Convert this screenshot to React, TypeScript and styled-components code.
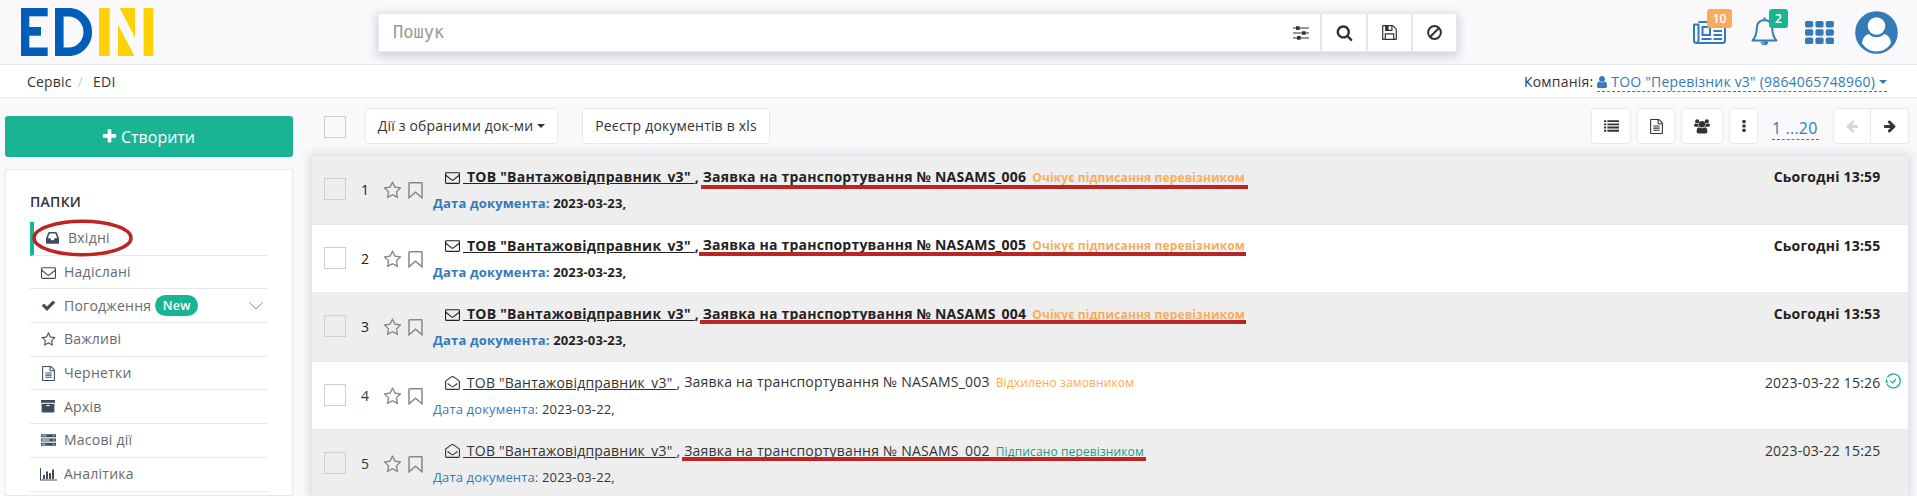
import React from "react";
import styled, { createGlobalStyle, css } from "styled-components";

const Global = createGlobalStyle`
  *, *::before, *::after { box-sizing: border-box; }
  html, body { margin: 0; height: 100%; overflow: hidden; }
  body { background: #f9f9fb; color: #333; font: 15px/20px "Open Sans", "Noto Sans", sans-serif; }
  #root { height: 100%; }
  svg { display: block; flex: none; }
  button { font: inherit; color: inherit; letter-spacing: inherit; }
`;

const C = { line: "#e7eaec", blue: "#337ab7", green: "#1ab394", orange: "#f8ac59", red: "#bd2525", slate: "#3d4d5d" };

/* ---------- icons ---------- */

const P = {
  envelope:
    "M1664 1504v-768q-32 36-69 66-268 206-426 338-51 43-83 67t-86.5 48.5-102.5 24.5h-2q-48 0-102.5-24.5t-86.5-48.5-83-67q-158-132-426-338-37-30-69-66v768q0 13 9.5 22.5t22.5 9.5h1472q13 0 22.5-9.5t9.5-22.5zm0-1051v-24.5l-.5-13-3-12.5-5.5-9-9-7.5-14-2.5h-1472q-13 0-22.5 9.5t-9.5 22.5q0 168 147 284 193 152 401 317 6 5 35 29.5t46 37.5 44.5 31.5 50.5 27.5 43 9h2q20 0 43-9t50.5-27.5 44.5-31.5 46-37.5 35-29.5q208-165 401-317 54-43 100.5-115.5t46.5-131.5zm128-37v1088q0 66-47 113t-113 47h-1472q-66 0-113-47t-47-113v-1088q0-66 47-113t113-47h1472q66 0 113 47t47 113z",
  star: "M1201 1004l306-297-422-62-189-382-189 382-422 62 306 297-73 421 378-199 377 199zm527-357q0 22-26 48l-363 354 86 500q1 7 1 20 0 50-41 50-19 0-40-12l-449-236-449 236q-22 12-40 12-21 0-31.5-14.5t-10.5-35.5q0-6 2-20l86-500-364-354q-25-27-25-48 0-37 56-46l502-73 225-455q19-41 49-41t49 41l225 455 502 73q56 9 56 46z",
  file: "M1596 380q28 28 48 76t20 88v1152q0 40-28 68t-68 28h-1344q-40 0-68-28t-28-68v-1600q0-40 28-68t68-28h896q40 0 88 20t76 48zm-444-244v376h376q-10-29-22-41l-313-313q-12-12-41-22zm384 1528v-1024h-416q-40 0-68-28t-28-68v-416h-768v1536h1280zm-1024-864q0-14 9-23t23-9h704q14 0 23 9t9 23v64q0 14-9 23t-23 9h-704q-14 0-23-9t-9-23v-64zm736 224q14 0 23 9t9 23v64q0 14-9 23t-23 9h-704q-14 0-23-9t-9-23v-64q0-14 9-23t23-9h704zm0 256q14 0 23 9t9 23v64q0 14-9 23t-23 9h-704q-14 0-23-9t-9-23v-64q0-14 9-23t23-9h704z",
  check:
    "M1671 566q0 40-28 68l-724 724-136 136q-28 28-68 28t-68-28l-136-136-362-362q-28-28-28-68t28-68l136-136q28-28 68-28t68 28l294 295 656-657q28-28 68-28t68 28l136 136q28 28 28 68z",
  plus: "M1600 736v192q0 40-28 68t-68 28h-416v416q0 40-28 68t-68 28h-192q-40 0-68-28t-28-68v-416h-416q-40 0-68-28t-28-68v-192q0-40 28-68t68-28h416v-416q0-40 28-68t68-28h192q40 0 68 28t28 68v416h416q40 0 68 28t28 68z",
  search:
    "M1216 832q0-185-131.5-316.5t-316.5-131.5-316.5 131.5-131.5 316.5 131.5 316.5 316.5 131.5 316.5-131.5 131.5-316.5zm512 832q0 52-38 90t-90 38q-54 0-90-38l-343-342q-179 124-399 124-143 0-273.5-55.5t-225-150-150-225-55.5-273.5 55.5-273.5 150-225 225-150 273.5-55.5 273.5 55.5 225 150 150 225 55.5 273.5q0 220-124 399l343 343q37 37 37 90z",
  left: "M1664 896v128q0 53-32.5 90.5t-84.5 37.5h-704l293 294q38 36 38 90t-38 90l-75 76q-37 37-90 37-52 0-91-37l-651-652q-37-37-37-90 0-52 37-91l651-650q38-38 91-38 52 0 90 38l75 74q38 38 38 91t-38 91l-293 293h704q52 0 84.5 37.5t32.5 90.5z",
};

const Glyph = ({ name, size = 14, flip }: { name: keyof typeof P; size?: number; flip?: boolean }) => (
  <svg width={size} height={size} viewBox="0 0 1792 1792" fill="currentColor">
    <path d={P[name]} transform={flip ? "translate(1792 0) scale(-1 1)" : undefined} />
  </svg>
);

const User = () => (
  <svg width="10" height="12" viewBox="256 128 1280 1536" fill="currentColor">
    <path d="M1536 1399q0 109-62.5 187t-150.500 78h-854q-88 0-150.500-78t-62.500-187q0-85 8.500-160.500t31.500-152 58.500-131 94-89 134.500-34.500q131 128 313 128t313-128q76 0 134.500 34.500t94 89 58.500 131 31.500 152 8.500 160.500zm-256-887q0 159-112.500 271.500t-271.500 112.500-271.500-112.500-112.500-271.500 112.500-271.500 271.500-112.500 271.500 112.500 112.500 271.500z" />
  </svg>
);
const Inbox = () => (
  <svg width="13" height="12" viewBox="0 0 13 12" fill="currentColor">
    <path fillRule="evenodd" d="M2.3.6Q2.5 0 3.1 0h6.8q.6 0 .8.6L13 6.3V11q0 .7-.7.7H.7Q0 11.700 0 11V6.300zM3.600 1.600 1.800 6.200h2.500l1 2h2.400l1-2h2.500L9.400 1.600z" />
  </svg>
);
const Archive = () => (
  <svg width="14" height="13" viewBox="0 0 14 13" fill="currentColor">
    <path fillRule="evenodd" d="M.5 0h13q.5 0 .5.500v2.200H0V.500Q0 0 .5 0zM.6 3.700h12.800v8.100q0 .7-.7.700H1.300q-.7 0-.7-.7zM5.500 5v1h3V5z" />
  </svg>
);
const Server = () => (
  <svg width="15" height="12" viewBox="0 0 15 12" fill="currentColor">
    <path fillRule="evenodd" d="M0 .3h15v3H0zM0 4.500h15v3H0zM0 8.700h15v3H0zM1 1.400v.8h4.500v-.8zM1 5.600v.8h7.500v-.8zM1 9.800v.8h3.500v-.8zM12.300 1.300v1h1.200v-1zM12.300 5.500v1h1.200v-1zM12.300 9.700v1h1.200v-1z" />
  </svg>
);
const Chart = () => (
  <svg width="17" height="13" viewBox="0 0 17 13" fill="currentColor">
    <path d="M0 0h1v11.500h16v1H0zM3 7h2v4H3zM6 3.500h2V11H6zM9 5h2v6H9zM12 1.500h2V11h-2z" />
  </svg>
);
const Sliders = () => (
  <svg width="16" height="14" viewBox="0 0 16 14" fill="currentColor">
    <path d="M0 1.600h16v1H0zM0 6.500h16v1H0zM0 11.400h16v1H0zM3 .3h3.600v3.600H3zM9 5.200h3.600v3.600H9zM4 10.100h3.600v3.600H4z" />
  </svg>
);
const Save = () => (
  <svg width="15" height="15" viewBox="0 0 15 15" fill="none" stroke="currentColor" strokeWidth="1.200">
    <path d="M.7.700h10.100l3.500 3.500v10.100H.7z" strokeLinejoin="round" />
    <path d="M3.300 14V8.800h8.400V14M3.700.900v4.500h6.200V.900" />
    <path d="M4 1h2.600v4H4z" fill="currentColor" stroke="none" />
  </svg>
);
const Ban = () => (
  <svg width="15" height="15" viewBox="0 0 15 15" fill="none" stroke="currentColor" strokeWidth="2">
    <circle cx="7.500" cy="7.500" r="6.400" />
    <path d="M12 3 3 12" />
  </svg>
);
const ListIcon = () => (
  <svg width="15" height="12" viewBox="0 0 15 12" fill="currentColor">
    {[0.2, 3.4, 6.6, 9.8].map((y) => (
      <path key={y} d={`M0 ${y}h2.200v1.900H0zM3.400 ${y}H15v1.900H3.400z`} />
    ))}
  </svg>
);
const Users = () => (
  <svg width="16" height="15" viewBox="0 0 16 15" fill="currentColor">
    <circle cx="3.200" cy="2.400" r="2.100" />
    <circle cx="12.800" cy="2.400" r="2.100" />
    <circle cx="8" cy="5.200" r="3.200" />
    <path d="M1.300 4.400Q3 5.500 4.400 4.600 4.100 6.400 5 7.700H1.500Q0 7.700 0 6.300 0 4.500 1.300 4.400zM14.700 4.400Q13 5.500 11.600 4.600 11.900 6.400 11 7.700h3.500Q16 7.700 16 6.300 16 4.500 14.700 4.400zM5 8.200q3 2.200 6 0 2.400.3 2.400 4.200 0 2.100-2 2.100H4.600q-2 0-2-2.100Q2.600 8.500 5 8.200z" />
  </svg>
);
const Dots = () => (
  <svg width="4" height="12" viewBox="0 0 4 12" fill="currentColor">
    {[0, 4.4, 8.8].map((y) => (
      <rect key={y} x=".4" y={y} width="3.200" height="3.200" rx=".7" />
    ))}
  </svg>
);
const Bookmark = () => (
  <svg width="15" height="17" viewBox="0 0 15 17" fill="none" stroke="currentColor" strokeWidth="1.500">
    <path d="M1 1.500Q1 .8 1.700.8h11.600q.7 0 .7.700V15.800L7.500 10.300 1 15.800z" />
  </svg>
);
const OpenMail = () => (
  <svg width="15" height="14" viewBox="0 0 15 14" fill="none" stroke="currentColor" strokeWidth="1.100">
    <path d="M.6 5.200Q3 3.200 6.300.9q1.200-.7 2.400 0Q12 3.200 14.400 5.200v7q0 1.200-1.200 1.200H1.800Q.6 13.400.6 12.200z" />
    <path d="M2.600 7.500l3.800 2.900q1.100.8 2.200 0l3.800-2.900" />
  </svg>
);
const Chevron = () => (
  <svg width="14" height="8" viewBox="0 0 14 8" fill="none" stroke="#888" strokeWidth="1">
    <path d="M.5.700 7 7 13.500.700" />
  </svg>
);
const News = () => (
  <svg width="33" height="23" viewBox="0 0 33 23" fill="none" stroke="currentColor" strokeWidth="2">
    <path d="M5.500 1H32v18.500Q32 22 29.500 22H3.500Q1 22 1 19.500V3.500h4.500V19Q5.500 22 3 22" strokeLinejoin="round" />
    <path d="M9.500 6h7.500v8H9.500zM20.500 6H29M20.500 10H29M20.500 14H29M8.500 18H18.500M20.500 18H29" />
  </svg>
);
const Bell = () => (
  <svg width="27" height="29" viewBox="0 0 27 29" fill="none" stroke="currentColor" strokeWidth="2">
    <path d="M13.500 3Q6.200 3.400 5.800 10.800 5.600 19.500 1.500 23.500H25.500Q21.400 19.500 21.200 10.800 20.800 3.400 13.500 3z" strokeLinejoin="round" />
    <path d="M13.500.300V3" />
    <path d="M9.700 24.500a3.800 3.800 0 0 0 7.600 0z" fill="currentColor" stroke="none" />
    <path d="M11.200 25q.3 1.800 2.300 2" stroke="#f9f9fb" strokeWidth=".7" />
  </svg>
);
const Grid = () => (
  <svg width="29" height="23" viewBox="0 0 29 23" fill="currentColor">
    {[0, 8.3, 16.6].map((y) => [0, 10.4, 20.7].map((x) => <rect key={`${x}-${y}`} x={x} y={y} width="8.200" height="6.400" rx="1.600" />))}
  </svg>
);
const Avatar = () => (
  <svg width="43" height="43" viewBox="0 0 43 43">
    <circle cx="21.500" cy="21.500" r="21.300" fill={C.blue} />
    <path d="M7 32.500Q7.700 24 14 23q3 3.200 7.500 3.200T29 23q6.300 1 7 9.500-5.500 8-14.500 8T7 32.500z" fill="#fff" />
    <circle cx="21.500" cy="15" r="9.900" fill={C.blue} />
    <circle cx="21.500" cy="15" r="8.800" fill="#fff" />
  </svg>
);
const Verified = () => (
  <svg width="16" height="16" viewBox="0 0 16 16" fill="none" stroke={C.green} strokeWidth="1.300">
    <path d="M2.300 4.300A7 7 0 1 1 1.900 10.800" />
    <path d="M1.500 8.500A7 7 0 0 1 1.700 6" />
    <path d="M0 8.300h3.400L1.900 10.600z" fill={C.green} stroke="none" />
    <path d="M5.300 7.900l2.100 2 3.600-3.600" />
  </svg>
);
const Logo = () => (
  <svg width="133" height="48" viewBox="0 0 133 48">
    <g fill="#005eb8">
      <rect width="8.300" height="48" />
      <rect width="26.700" height="8.300" />
      <rect y="19" width="20" height="8.700" />
      <rect y="39.500" width="26.700" height="8.500" />
    </g>
    <path d="M38.300 4.200H47.500A19.300 19.800 0 0 1 47.500 43.800H38.300z" fill="none" stroke="#005eb8" strokeWidth="8.600" />
    <g fill="#ffd103">
      <rect x="78" width="10.700" height="48" />
      <path d="M98.700 0H114v29.700zM97 16.700V48h16.500z" />
      <rect x="122.600" width="9.600" height="48" />
    </g>
  </svg>
);

/* ---------- header ---------- */

const Page = styled.div`
  height: 100%;
  display: flex;
  flex-direction: column;
`;
const Header = styled.header`
  flex: none;
  height: 65px;
  padding: 8px 19px 0 21px;
  border-bottom: 1px solid ${C.line};
  display: flex;
  align-items: flex-start;
`;
const SearchBar = styled.div`
  width: 1079px;
  height: 39px;
  margin: 5px 0 0 224px;
  display: flex;
  background: #fff;
  border: 1px solid ${C.line};
  box-shadow: 0 3px 9px 2px rgba(60, 60, 110, 0.2);
`;
const Placeholder = styled.span`
  flex: 1;
  padding: 0 14px;
  color: #999;
  font: 17px/37px "DejaVu Sans Mono", monospace;
`;
const SearchAction = styled.button<{ $w: number; $plain?: boolean }>`
  width: ${(p) => p.$w}px;
  padding: 0;
  border: 0;
  border-left: ${(p) => (p.$plain ? "0" : "2px solid #e5e6e7")};
  background: none;
  display: flex;
  align-items: center;
  justify-content: center;
`;
const Tools = styled.div`
  margin-left: auto;
  display: flex;
  align-items: flex-start;
  color: ${C.blue};
`;
const Tool = styled.div<{ $top: number; $gap?: number }>`
  position: relative;
  margin: ${(p) => p.$top}px 0 0 ${(p) => p.$gap ?? 0}px;
`;
const Count = styled.span<{ $bg: string; $left: number; $top: number; $w: number }>`
  position: absolute;
  left: ${(p) => p.$left}px;
  top: ${(p) => p.$top}px;
  width: ${(p) => p.$w}px;
  height: 19px;
  border-radius: 3px;
  background: ${(p) => p.$bg};
  color: #fff;
  font-size: 12px;
  font-weight: 600;
  line-height: 19px;
  text-align: center;
`;
const Crumbs = styled.nav`
  flex: none;
  height: 33px;
  padding: 2px 30px 0 27px;
  background: #fff;
  border-bottom: 1px solid ${C.line};
  display: flex;
  align-items: center;
  font-size: 14px;
  letter-spacing: 0.2px;
`;
const Slash = styled.span`
  margin: 0 10px 0 6px;
  color: #ccc;
`;
const Company = styled.div`
  margin-left: auto;
  display: flex;
  gap: 4px;
`;
const CompanyLink = styled.a`
  height: 20px;
  border-bottom: 1px dashed ${C.blue};
  color: ${C.blue};
  display: flex;
  align-items: center;
  gap: 4px;
`;
const Caret = styled.i`
  border: 4px solid transparent;
  border-top-color: currentColor;
  border-bottom: 0;
`;

/* ---------- sidebar ---------- */

const Body = styled.main`
  flex: 1;
  min-height: 0;
  display: flex;
`;
const Side = styled.aside`
  flex: none;
  width: 288px;
  margin: 18px 19px 0 5px;
  display: flex;
  flex-direction: column;
`;
const Create = styled.button`
  flex: none;
  height: 41px;
  padding: 0 2px 0 0;
  border: 0;
  border-radius: 3px;
  background: ${C.green};
  color: #fff;
  font-size: 16px;
  display: flex;
  align-items: center;
  justify-content: center;
  gap: 3px;
`;
const Folders = styled.section`
  flex: 1;
  margin-top: 12px;
  padding: 22px 24px 0;
  background: #fff;
  border: 1px solid #e7e8f1;
`;
const FoldersTitle = styled.h5`
  margin: 0 0 10px;
  font-size: 14px;
  font-weight: 600;
  line-height: 20px;
  letter-spacing: 0.25px;
`;
const Folder = styled.div<{ $active?: boolean }>`
  position: relative;
  height: 33.7px;
  padding: 0 5px 0 9px;
  border-bottom: 1px solid ${C.line};
  display: flex;
  align-items: center;
  color: #676a6c;
  font-size: 14px;
  letter-spacing: 0.25px;
  ${(p) => p.$active && css`border-left: 4px solid ${C.green};`}
`;
const FolderIcon = styled.span`
  width: 18px;
  margin-right: 7px;
  display: flex;
  justify-content: center;
  color: ${C.slate};
`;
const NewTag = styled.span`
  margin: 0 auto 0 4px;
  width: 43px;
  height: 21px;
  border-radius: 11px;
  background: ${C.green};
  color: #fff;
  font-size: 12.5px;
  font-weight: 600;
  line-height: 21px;
  text-align: center;
`;
const Ring = styled.svg`
  position: absolute;
  left: -2px;
  top: -3px;
`;

/* ---------- content ---------- */

const Content = styled.section`
  flex: 1;
  min-width: 0;
  margin-right: 9px;
  display: flex;
  flex-direction: column;
`;
const Toolbar = styled.div`
  flex: none;
  height: 58px;
  margin-right: -1px;
  padding: 10px 0 0 12px;
  display: flex;
  align-items: flex-start;
  letter-spacing: 0.18px;
`;
const Box = styled.span`
  flex: none;
  width: 22px;
  height: 22px;
  border: 1px solid #d2cdc8;
`;
const ToolbarBox = styled(Box)`
  margin-top: 8px;
`;
const Btn = styled.button<{ $w: number; $ml?: number; $dim?: boolean; $side?: "l" | "r" }>`
  width: ${(p) => p.$w}px;
  height: 36px;
  margin-left: ${(p) => p.$ml ?? 0}px;
  padding: 0;
  border: 1px solid ${C.line};
  border-radius: ${(p) => (p.$side === "l" ? "3px 0 0 3px" : p.$side === "r" ? "0 3px 3px 0" : "3px")};
  background: #fff;
  font-size: 14px;
  display: flex;
  align-items: center;
  justify-content: center;
  gap: 4px;
  color: ${(p) => (p.$dim ? "#d5d5d5" : "#333")};
`;
const Spacer = styled.span`
  flex: 1;
`;
const Range = styled.a`
  width: 47px;
  height: 23px;
  margin: 9px 0 0 14px;
  border-bottom: 1px dashed ${C.blue};
  color: ${C.blue};
  font-size: 16px;
  line-height: 22px;
  white-space: nowrap;
`;
const Docs = styled.div`
  flex: 1;
  min-height: 0;
  box-shadow: 0 0 9px 2px rgba(60, 60, 110, 0.18);
  background: #fff;
`;
const Row = styled.div<{ $unread?: boolean; $shade?: boolean }>`
  height: 68.6px;
  padding: 0 0 0 12px;
  border-bottom: 1px solid ${C.line};
  background: ${(p) => (p.$shade ? "#eee" : "#fff")};
  display: flex;
  align-items: flex-start;
  color: ${(p) => (p.$unread ? "#222" : "#333")};
  font-weight: ${(p) => (p.$unread ? 700 : 400)};
`;
const RowBox = styled(Box)`
  margin-top: 22px;
`;
const Num = styled.span`
  width: 38px;
  margin-top: 24px;
  text-align: center;
  font-weight: 400;
  font-size: 14px;
`;
const Marks = styled.span`
  display: flex;
  align-items: center;
  gap: 6px;
  margin: 25px 0 0 -1px;
  width: 50px;
  color: #888;
`;
const Text = styled.div`
  flex: 1;
  margin-top: 9px;
`;
const Title = styled.div`
  height: 24px;
  padding-left: 12px;
  display: flex;
  align-items: center;
  font-size: 14px;
  line-height: 24px;
  white-space: pre;
  letter-spacing: 0.21px;
`;
const Sender = styled.span<{ $bold?: boolean }>`
  margin-left: 3px;
  letter-spacing: ${(p) => (p.$bold ? 0.26 : 0.22)}px;
  text-decoration: underline;
`;
const Subject = styled.span<{ $mark?: [number, number, number] }>`
  position: relative;
  ${(p) =>
    p.$mark &&
    css`
      &::after {
        content: "";
        position: absolute;
        left: ${p.$mark[0]}px;
        right: ${-p.$mark[1]}px;
        top: ${p.$mark[2]}px;
        height: 4px;
        background: ${C.red};
      }
    `}
`;
const Status = styled.span<{ $c: string }>`
  margin-left: 6px;
  color: ${(p) => p.$c};
  font-size: 12px;
  letter-spacing: 0.12px;
`;
const Meta = styled.div`
  margin-top: 4px;
  font-size: 13px;
  line-height: 20px;
  letter-spacing: 0.15px;
`;
const MetaLabel = styled.span`
  color: ${C.blue};
`;
const When = styled.div`
  width: 160px;
  margin: 11px 27.5px 0 0;
  text-align: right;
  font-size: 14px;
  letter-spacing: 0.2px;
  position: relative;
`;
const Seal = styled.span`
  position: absolute;
  right: -20px;
  top: 0;
`;

const folders: [string, React.ReactNode][] = [
  ["Вхідні", <Inbox />],
  ["Надіслані", <Glyph name="envelope" size={15} />],
  ["Погодження", <Glyph name="check" size={15} />],
  ["Важливі", <Glyph name="star" size={15} />],
  ["Чернетки", <Glyph name="file" size={15} />],
  ["Архів", <Archive />],
  ["Масові дії", <Server />],
  ["Аналітика", <Chart />],
];

type Doc = { n: string; date: string; when: string; status: string; color: string; unread?: boolean; seal?: boolean; mark?: [number, number, number] };
const wait = "Очікує підписання перевізником";
const docs: Doc[] = [
  { n: "006", date: "2023-03-23", when: "Сьогодні 13:59", status: wait, color: C.orange, unread: true, mark: [-2, 3, 20] },
  { n: "005", date: "2023-03-23", when: "Сьогодні 13:55", status: wait, color: C.orange, unread: true, mark: [-4, 1, 19.4] },
  { n: "004", date: "2023-03-23", when: "Сьогодні 13:53", status: wait, color: C.orange, unread: true, mark: [-3, 1, 18.8] },
  { n: "003", date: "2023-03-22", when: "2023-03-22 15:26", status: "Відхилено замовником", color: C.orange, seal: true },
  { n: "002", date: "2023-03-22", when: "2023-03-22 15:25", status: "Підписано перевізником", color: "#1a9c80", mark: [-2, 2, 18.6] },
];

export default function App() {
  return (
    <Page>
      <Global />
      <Header>
        <Logo />
        <SearchBar>
          <Placeholder>Пошук</Placeholder>
          <SearchAction $w={38} $plain><Sliders /></SearchAction>
          <SearchAction $w={46}><Glyph name="search" size={17} /></SearchAction>
          <SearchAction $w={45}><Save /></SearchAction>
          <SearchAction $w={45}><Ban /></SearchAction>
        </SearchBar>
        <Tools>
          <Tool $top={13}><News /><Count $bg={C.orange} $left={14} $top={-12} $w={25}>10</Count></Tool>
          <Tool $top={9} $gap={25}><Bell /><Count $bg={C.green} $left={18} $top={-8} $w={19}>2</Count></Tool>
          <Tool $top={13} $gap={27}><Grid /></Tool>
          <Tool $top={3} $gap={21}><Avatar /></Tool>
        </Tools>
      </Header>
      <Crumbs>
        <span>Сервіс</span><Slash>/</Slash><span>EDI</span>
        <Company>
          <span>Компанія:</span>
          <CompanyLink><User /><span>ТОО "Перевізник v3" (9864065748960)</span><Caret /></CompanyLink>
        </Company>
      </Crumbs>
      <Body>
        <Side>
          <Create><Glyph name="plus" size={17} />Створити</Create>
          <Folders>
            <FoldersTitle>ПАПКИ</FoldersTitle>
            {folders.map(([label, icon], i) => (
              <Folder key={label} $active={i === 0}>
                <FolderIcon>{icon}</FolderIcon>
                {label}
                {i === 2 && <><NewTag>New</NewTag><Chevron /></>}
                {i === 0 && (
                  <Ring width="101" height="38" viewBox="0 0 101 38">
                    <ellipse cx="50.500" cy="19" rx="48.500" ry="16.700" fill="none" stroke={C.red} strokeWidth="3.500" />
                  </Ring>
                )}
              </Folder>
            ))}
          </Folders>
        </Side>
        <Content>
          <Toolbar>
            <ToolbarBox />
            <Btn $w={193} $ml={19}>Дії з обраними док-ми<Caret /></Btn>
            <Btn $w={188} $ml={24}>Реєстр документів в xls</Btn>
            <Spacer />
            <Btn $w={40}><ListIcon /></Btn>
            <Btn $w={38} $ml={6}><Glyph name="file" size={15} /></Btn>
            <Btn $w={42} $ml={6}><Users /></Btn>
            <Btn $w={29} $ml={6}><Dots /></Btn>
            <Range>1 ...20</Range>
            <Btn $w={38} $ml={14} $side="l" $dim><Glyph name="left" size={14} /></Btn>
            <Btn $w={39} $ml={-1} $side="r"><Glyph name="left" size={14} flip /></Btn>
          </Toolbar>
          <Docs>
            {docs.map((d, i) => (
              <Row key={d.n} $unread={d.unread} $shade={i % 2 === 0}>
                <RowBox />
                <Num>{i + 1}</Num>
                <Marks><Glyph name="star" size={19} /><Bookmark /></Marks>
                <Text>
                  <Title>
                    {d.unread ? <Glyph name="envelope" size={15} /> : <OpenMail />}
                    <Sender $bold={d.unread}>{' ТОВ "Вантажовідправник_v3" '}</Sender>
                    {", "}
                    <Subject $mark={d.mark}>
                      Заявка на транспортування № NASAMS_{d.n}
                      <Status $c={d.color}>{d.status}</Status>
                    </Subject>
                  </Title>
                  <Meta><MetaLabel>Дата документа:</MetaLabel> {d.date},</Meta>
                </Text>
                <When>{d.when}{d.seal && <Seal><Verified /></Seal>}</When>
              </Row>
            ))}
          </Docs>
        </Content>
      </Body>
    </Page>
  );
}
